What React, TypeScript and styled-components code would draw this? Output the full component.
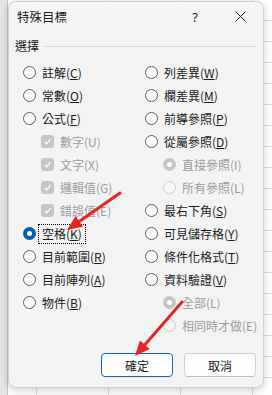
import React from 'react';
import styled, { createGlobalStyle, css } from 'styled-components';

const Global = createGlobalStyle`
  html, body { margin: 0; padding: 0; }
  body {
    width: 272px; height: 395px; overflow: hidden; background: #fff;
    font-family: "Noto Sans CJK TC", "Noto Sans", sans-serif;
    color: #1b1b1b;
  }
`;

const Sheet = styled.div`
  position: relative;
  width: 272px;
  height: 395px;
  box-sizing: border-box;
  padding: 1px 8px 0;
  background:
    linear-gradient(to right, #e6e6e6 0 7px, #c4c4c4 7px 8px, transparent 8px),
    repeating-linear-gradient(to bottom, transparent 0 20px, #dcdcdc 20px 21px),
    repeating-linear-gradient(to right, transparent 0 36px, #dcdcdc 36px 37px, transparent 37px 72px);
`;

const Dialog = styled.div`
  width: 256px;
  height: 387px;
  box-sizing: border-box;
  background: #f3f3f3;
  border: 1px solid #cfcfcf;
  border-radius: 8px;
  box-shadow: 0 2px 8px rgba(0, 0, 0, 0.2);
  display: flex;
  flex-direction: column;
  overflow: hidden;
`;

const TitleBar = styled.div`
  height: 29px;
  display: flex;
  align-items: center;
  padding-left: 8px;
  background: #f5f5f5;
`;

const Title = styled.div`
  flex: 1;
  font-size: 12.5px;
  color: #1b1b1b;
`;

const TitleButton = styled.div<{ $w: number }>`
  width: ${(p) => p.$w}px;
  height: 29px;
  display: flex;
  align-items: center;
  justify-content: center;
  font-family: "Noto Sans", sans-serif;
  font-size: 13px;
  color: #1b1b1b;
`;

const Body = styled.div`
  flex: 1;
  display: flex;
  flex-direction: column;
  padding: 6px 7px 10px 6px;
`;

const GroupHead = styled.div`
  display: flex;
  align-items: center;
  height: 16px;
  font-size: 12px;
  gap: 6px;
`;

const GroupLine = styled.div`
  flex: 1;
  height: 1px;
  background: #d6d6d6;
  margin-top: 2px;
`;

const Columns = styled.div`
  display: grid;
  grid-template-columns: 122px 1fr;
  padding-left: 8px;
  margin-top: 8px;
`;

const Column = styled.div`
  display: flex;
  flex-direction: column;
`;

const Row = styled.div<{ $indent?: boolean }>`
  height: 23px;
  display: flex;
  align-items: center;
  padding-left: ${(p) => (p.$indent ? 18 : 0)}px;
`;

const Radio = styled.span<{ $checked?: boolean; $disabled?: boolean }>`
  position: relative;
  width: 13px;
  height: 13px;
  box-sizing: border-box;
  border-radius: 50%;
  flex: none;
  border: 1px solid #5f5f5f;
  background: #fbfbfb;
  ${(p) =>
    p.$disabled &&
    css`
      border-color: #cdcdcd;
      background: #f6f6f6;
    `}
  ${(p) =>
    p.$checked &&
    css`
      border: none;
      background: ${p.$disabled ? '#c6c6c6' : '#005fb8'};
      &::after {
        content: '';
        position: absolute;
        left: 4px;
        top: 4px;
        width: 5px;
        height: 5px;
        border-radius: 50%;
        background: #fff;
      }
    `}
`;

const Check = styled.span`
  width: 13px;
  height: 13px;
  border-radius: 3px;
  background: #c6c6c6;
  flex: none;
  display: flex;
  align-items: center;
  justify-content: center;
`;

const Label = styled.span<{ $disabled?: boolean; $focus?: boolean }>`
  margin-left: 4px;
  padding: 0 2px;
  font-size: 12px;
  line-height: 16px;
  white-space: nowrap;
  color: ${(p) => (p.$disabled ? '#9d9d9d' : '#1b1b1b')};
  ${(p) =>
    p.$focus &&
    css`
      outline: 1px dotted #000;
      outline-offset: 1px;
    `}
`;

const Key = styled.span`
  text-decoration: underline;
  text-underline-offset: 1px;
`;

const Footer = styled.div`
  margin-top: auto;
  display: flex;
  justify-content: flex-end;
  gap: 11px;
`;

const Button = styled.div<{ $primary?: boolean }>`
  width: 72px;
  height: 24px;
  box-sizing: border-box;
  border-radius: 4px;
  background: #fdfdfd;
  border: 1px solid ${(p) => (p.$primary ? '#1067b8' : '#d3d3d3')};
  ${(p) => !p.$primary && css`border-bottom-color: #bdbdbd;`}
  display: flex;
  align-items: center;
  justify-content: center;
  font-size: 12px;
  color: #1b1b1b;
`;

const Overlay = styled.svg`
  position: absolute;
  left: 0;
  top: 0;
  pointer-events: none;
`;

type Opt = {
  text: string;
  key: string;
  kind: 'radio' | 'check';
  indent?: boolean;
  checked?: boolean;
  disabled?: boolean;
  focus?: boolean;
};

const left: Opt[] = [
  { text: '註解', key: 'C', kind: 'radio' },
  { text: '常數', key: 'O', kind: 'radio' },
  { text: '公式', key: 'F', kind: 'radio' },
  { text: '數字', key: 'U', kind: 'check', indent: true, disabled: true, checked: true },
  { text: '文字', key: 'X', kind: 'check', indent: true, disabled: true, checked: true },
  { text: '邏輯值', key: 'G', kind: 'check', indent: true, disabled: true, checked: true },
  { text: '錯誤值', key: 'E', kind: 'check', indent: true, disabled: true, checked: true },
  { text: '空格', key: 'K', kind: 'radio', checked: true, focus: true },
  { text: '目前範圍', key: 'R', kind: 'radio' },
  { text: '目前陣列', key: 'A', kind: 'radio' },
  { text: '物件', key: 'B', kind: 'radio' },
];

const right: Opt[] = [
  { text: '列差異', key: 'W', kind: 'radio' },
  { text: '欄差異', key: 'M', kind: 'radio' },
  { text: '前導參照', key: 'P', kind: 'radio' },
  { text: '從屬參照', key: 'D', kind: 'radio' },
  { text: '直接參照', key: 'I', kind: 'radio', indent: true, disabled: true, checked: true },
  { text: '所有參照', key: 'L', kind: 'radio', indent: true, disabled: true },
  { text: '最右下角', key: 'S', kind: 'radio' },
  { text: '可見儲存格', key: 'Y', kind: 'radio' },
  { text: '條件化格式', key: 'T', kind: 'radio' },
  { text: '資料驗證', key: 'V', kind: 'radio' },
  { text: '全部', key: 'L', kind: 'radio', indent: true, disabled: true, checked: true },
  { text: '相同時才做', key: 'E', kind: 'radio', indent: true, disabled: true },
];

function Option({ o }: { o: Opt }) {
  return (
    <Row $indent={o.indent}>
      {o.kind === 'radio' ? (
        <Radio $checked={o.checked} $disabled={o.disabled} />
      ) : (
        <Check>
          <svg width="9" height="9" viewBox="0 0 9 9">
            <path d="M1.5 4.8 L3.6 6.8 L7.6 2.2" fill="none" stroke="#fff" strokeWidth="1.2" />
          </svg>
        </Check>
      )}
      <Label $disabled={o.disabled} $focus={o.focus}>
        {o.text}(
        {o.disabled ? o.key : <Key>{o.key}</Key>})
      </Label>
    </Row>
  );
}

function Arrow({ x1, y1, x2, y2 }: { x1: number; y1: number; x2: number; y2: number }) {
  const dx = x2 - x1;
  const dy = y2 - y1;
  const len = Math.hypot(dx, dy);
  const ux = dx / len;
  const uy = dy / len;
  const hl = 15;
  const hw = 6.5;
  const bx = x2 - ux * hl;
  const by = y2 - uy * hl;
  const px = -uy * hw;
  const py = ux * hw;
  return (
    <g>
      <line x1={x1} y1={y1} x2={bx + ux} y2={by + uy} stroke="#e52620" strokeWidth="3" strokeLinecap="round" />
      <polygon
        points={`${x2},${y2} ${bx + px},${by + py} ${bx - px},${by - py}`}
        fill="#e52620"
      />
    </g>
  );
}

export default function App() {
  return (
    <>
      <Global />
      <Sheet>
        <Dialog>
          <TitleBar>
            <Title>特殊目標</Title>
            <TitleButton $w={44}>?</TitleButton>
            <TitleButton $w={46}>
              <svg width="11" height="11" viewBox="0 0 11 11">
                <path d="M0.5 0.5 L10.5 10.5 M10.5 0.5 L0.5 10.5" stroke="#1b1b1b" strokeWidth="1" />
              </svg>
            </TitleButton>
          </TitleBar>
          <Body>
            <GroupHead>
              選擇
              <GroupLine />
            </GroupHead>
            <Columns>
              <Column>
                {left.map((o) => (
                  <Option key={o.text} o={o} />
                ))}
              </Column>
              <Column>
                {right.map((o) => (
                  <Option key={o.text} o={o} />
                ))}
              </Column>
            </Columns>
            <Footer>
              <Button $primary>確定</Button>
              <Button>取消</Button>
            </Footer>
          </Body>
        </Dialog>
        <Overlay width="272" height="395" viewBox="0 0 272 395">
          <Arrow x1={120} y1={193} x2={67} y2={230} />
          <Arrow x1={182} y1={302} x2={135} y2={356} />
        </Overlay>
      </Sheet>
    </>
  );
}
